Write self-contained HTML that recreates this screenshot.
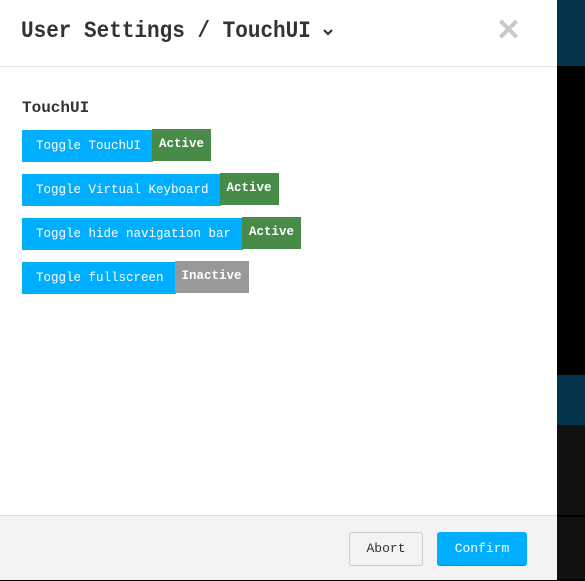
<!DOCTYPE html>
<html><head><style>
*{margin:0;padding:0;box-sizing:border-box}
body{width:585px;height:581px;background:#000;position:relative;overflow:hidden;font-family:"Liberation Mono",monospace}
.strip{position:absolute;left:557px;width:28px}
.modal{position:absolute;left:0;top:0;width:557px;height:580px;background:#fff}
.hdr{height:67px;border-bottom:1px solid #e5e5e5;position:relative}
.title{position:absolute;left:21px;top:19px;font-size:21px;font-weight:bold;color:#333;transform:scaleY(1.12);transform-origin:left top}
.chev{position:absolute;left:322px;top:28px}
.close{position:absolute;left:496px;top:13px;font-size:30px;color:#c8c8c8;font-family:"Liberation Sans",sans-serif;font-weight:bold}
h4{position:absolute;left:22px;top:99px;font-size:16px;font-weight:bold;color:#333}
.row{position:absolute;left:20px;height:33px;display:flex;align-items:flex-start}
.btn{background:#00aeff;color:#fff;font-size:12.5px;height:32px;line-height:32px;padding:0 12px 0 14px;margin-top:1px;margin-left:2px}
.badge{background:#488a48;color:#fff;font-size:12.5px;font-weight:bold;height:32px;line-height:31px;padding:0 7px;margin-left:-1px}
.in{background:#999}
.foot{position:absolute;left:0;top:515px;width:557px;height:65px;background:#f3f3f3;border-top:1px solid #ddd}
.ab{position:absolute;left:349px;top:16px;width:74px;height:34px;border:1px solid #ccc;border-radius:3px;background:#f3f3f3;color:#333;font-size:13px;text-align:center;line-height:32px}
.cf{position:absolute;left:437px;top:16px;width:90px;height:34px;border-radius:3px;background:#00aeff;color:#fff;font-size:13px;text-align:center;line-height:34px;border-bottom:1px solid #0090d0}
</style></head><body>
<div class="strip" style="top:0;height:66px;background:#04344c"></div>
<div class="strip" style="top:375px;height:50px;background:#04344c"></div>
<div class="strip" style="top:425px;height:90px;background:#111"></div>
<div class="strip" style="top:517px;height:62px;background:#111"></div>
<div class="modal">
<div class="hdr"><div class="title">User Settings / TouchUI</div>
<svg class="chev" width="12" height="8" viewBox="0 0 12 8"><path d="M2 2 L6 6 L10 2" stroke="#333" stroke-width="2.2" fill="none"/></svg>
<div class="close">✕</div></div>
<h4>TouchUI</h4>
<div class="row" style="top:129px"><div class="btn">Toggle TouchUI</div><div class="badge">Active</div></div>
<div class="row" style="top:173px"><div class="btn">Toggle Virtual Keyboard</div><div class="badge">Active</div></div>
<div class="row" style="top:217px"><div class="btn">Toggle hide navigation bar</div><div class="badge">Active</div></div>
<div class="row" style="top:261px"><div class="btn">Toggle fullscreen</div><div class="badge in">Inactive</div></div>
<div class="foot"><div class="ab">Abort</div><div class="cf">Confirm</div></div>
</div>
</body></html>
